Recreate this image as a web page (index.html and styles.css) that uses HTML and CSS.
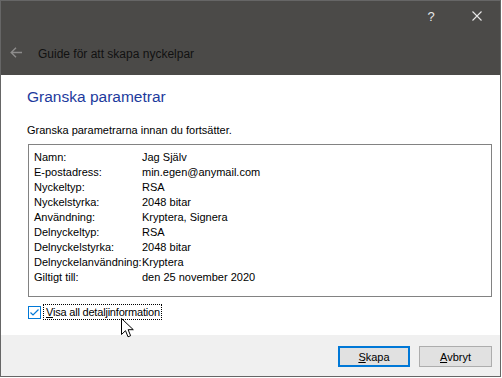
FILE: index.html
```html
<!DOCTYPE html>
<html lang="sv">
<head>
  <meta charset="UTF-8">
  <title>Guide för att skapa nyckelpar</title>
  <link rel="stylesheet" href="styles.css">
</head>
<body>

  <div class="window">
    <div class="titlebar">
      <div class="caption">
        <span class="cap-btn help">?</span>
        <span class="cap-btn close">
          <svg width="10" height="10" viewBox="0 0 10 10"><path d="M0.5 0.5L9.5 9.5M9.5 0.5L0.5 9.5" stroke="#e8e8e8" stroke-width="1.1" fill="none"/></svg>
        </span>
      </div>
      <div class="header">
        <svg class="back" width="12" height="11" viewBox="0 0 12 11"><path d="M12 5.5H1.2M6 0.8L1.2 5.5L6 10.2" stroke="#8d8c8b" stroke-width="1.4" fill="none"/></svg>
        <span class="title">Guide för att skapa nyckelpar</span>
      </div>
    </div>

    <div class="content">
      <h1>Granska parametrar</h1>
      <p class="intro">Granska parametrarna innan du fortsätter.</p>

      <div class="summary">
        <span>Namn:</span><span>Jag Själv</span>
        <span>E-postadress:</span><span>min.egen@anymail.com</span>
        <span>Nyckeltyp:</span><span>RSA</span>
        <span>Nyckelstyrka:</span><span>2048 bitar</span>
        <span>Användning:</span><span>Kryptera, Signera</span>
        <span>Delnyckeltyp:</span><span>RSA</span>
        <span>Delnyckelstyrka:</span><span>2048 bitar</span>
        <span>Delnyckelanvändning:</span><span>Kryptera</span>
        <span>Giltigt till:</span><span>den 25 november 2020</span>
      </div>

      <label class="check">
        <span class="box">
          <svg width="11" height="11" viewBox="0 0 11 11"><path d="M1.5 5.5L4 8L9.5 2.5" stroke="#0078d7" stroke-width="1.2" fill="none"/></svg>
        </span>
        <span class="focus"><u>V</u>isa all detaljinformation</span>
      </label>

      <svg class="cursor" width="13" height="21" viewBox="0 0 13 21">
        <path d="M0.5 0.5V16.5L4.5 12.7L7 18.8L9.6 17.7L7.1 11.7H12.3Z" fill="#fff" stroke="#000" stroke-width="1"/>
      </svg>
    </div>

    <div class="footer">
      <button class="btn default"><u>S</u>kapa</button>
      <button class="btn"><u>A</u>vbryt</button>
    </div>
  </div>

</body>
</html>
```

FILE: styles.css
```css
body {
  margin: 0;
  width: 502px;
  height: 378px;
  background-color: white;
  font-family: "Liberation Sans", Arial, sans-serif;
  font-size: 11px;
  color: #000;
}

.window {
  width: 501px;
  height: 377px;
  box-sizing: border-box;
  border: 1px solid #666;
  display: flex;
  flex-direction: column;
}

/* Titelrad */
.titlebar {
  height: 74px;
  background-color: #4b4a48;
}

.caption {
  height: 30px;
  display: flex;
  justify-content: flex-end;
}

.cap-btn {
  width: 46px;
  height: 30px;
  display: flex;
  align-items: center;
  justify-content: center;
  color: #e8e8e8;
}

.help {
  font-size: 13px;
}

.header {
  height: 44px;
  display: flex;
  align-items: center;
  padding-left: 9px;
}

.back {
  margin-right: 16px;
  margin-top: -2px;
}

.title {
  font-size: 12px;
  color: #111;
  padding-top: 2px;
}

/* Innehåll */
.content {
  position: relative;
  height: 260px;
  padding: 12px 0 0 26px;
  box-sizing: border-box;
  background-color: white;
}

h1 {
  margin: 0;
  font-size: 15.5px;
  font-weight: normal;
  line-height: 20px;
  color: #1d3a9d;
}

.intro {
  margin: 16px 0 0 0;
  line-height: 14px;
}

.summary {
  margin-top: 7px;
  margin-left: 1px;
  width: 464px;
  height: 153px;
  box-sizing: border-box;
  border: 1px solid #828282;
  padding: 5px 0 0 5px;
  display: grid;
  grid-template-columns: 108px auto;
  grid-auto-rows: 15px;
  line-height: 15px;
  align-content: start;
}

.check {
  margin-top: 7px;
  margin-left: 1px;
  display: flex;
  align-items: center;
  gap: 2px;
  height: 16px;
}

.check .box {
  width: 13px;
  height: 13px;
  box-sizing: border-box;
  border: 1px solid #0078d7;
  background-color: white;
  display: flex;
  align-items: center;
  justify-content: center;
}

.check .focus {
  border: 1px dotted #000;
  padding: 0 1px 0 2px;
  line-height: 14px;
  letter-spacing: -0.2px;
}

.cursor {
  position: absolute;
  left: 120px;
  top: 243px;
}

/* Knappar */
.footer {
  height: 41px;
  box-sizing: border-box;
  background-color: #f0f0f0;
  display: flex;
  justify-content: flex-end;
  align-items: flex-start;
  gap: 9px;
  padding: 11px 8px 0 0;
}

.btn {
  width: 73px;
  height: 21px;
  box-sizing: border-box;
  background-color: #e1e1e1;
  border: 1px solid #adadad;
  font-family: "Liberation Sans", Arial, sans-serif;
  font-size: 11px;
  color: #000;
  padding: 0;
}

.btn.default {
  width: 72px;
  border: 2px solid #0078d7;
}
```
